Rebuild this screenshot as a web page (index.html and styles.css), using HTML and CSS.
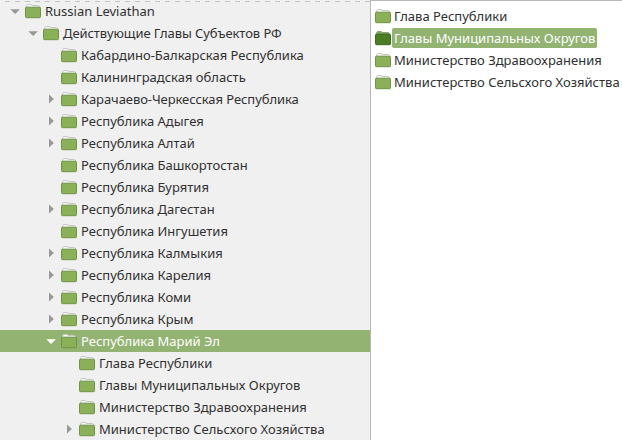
FILE: index.html
```
<!DOCTYPE html>
<html lang="ru">
<head>
    <meta charset="UTF-8">
    <meta content="width=device-width, initial-scale=1.0" name="viewport">
    <link rel="stylesheet" href="styles.css">
    <title>Russian Leviathan</title>
</head>
<body>

<svg class="symbols" height="0" width="0" xmlns="http://www.w3.org/2000/svg">
    <symbol id="folder" viewBox="0 0 16 16">
        <path class="paper" d="M1.5 6V3L2.5 1.5H6L7.5 2.5H13.5L14.5 3.5V6Z"/>
        <rect class="front" height="10.5" rx="1" width="15" x="0.5" y="4.2"/>
    </symbol>
    <symbol id="open" viewBox="0 0 10 10">
        <path d="M0.3 3.3H9.9L5.1 8.1Z"/>
    </symbol>
    <symbol id="closed" viewBox="0 0 10 10">
        <path d="M3 0.4L7.8 5L3 9.6Z"/>
    </symbol>
</svg>

<div class="window">
    <ul class="tree">
        <li class="row level0"><svg class="arrow"><use href="#open"/></svg><svg class="folder"><use href="#folder"/></svg><span>Russian Leviathan</span></li>
        <li class="row level1 tight"><svg class="arrow"><use href="#open"/></svg><svg class="folder"><use href="#folder"/></svg><span>Действующие Главы Субъектов РФ</span></li>
        <li class="row level2"><svg class="arrow"></svg><svg class="folder"><use href="#folder"/></svg><span>Кабардино-Балкарская Республика</span></li>
        <li class="row level2"><svg class="arrow"></svg><svg class="folder"><use href="#folder"/></svg><span>Калининградская область</span></li>
        <li class="row level2 tight"><svg class="arrow"><use href="#closed"/></svg><svg class="folder"><use href="#folder"/></svg><span>Карачаево-Черкесская Республика</span></li>
        <li class="row level2"><svg class="arrow"><use href="#closed"/></svg><svg class="folder"><use href="#folder"/></svg><span>Республика Адыгея</span></li>
        <li class="row level2"><svg class="arrow"><use href="#closed"/></svg><svg class="folder"><use href="#folder"/></svg><span>Республика Алтай</span></li>
        <li class="row level2"><svg class="arrow"></svg><svg class="folder"><use href="#folder"/></svg><span>Республика Башкортостан</span></li>
        <li class="row level2"><svg class="arrow"></svg><svg class="folder"><use href="#folder"/></svg><span>Республика Бурятия</span></li>
        <li class="row level2"><svg class="arrow"><use href="#closed"/></svg><svg class="folder"><use href="#folder"/></svg><span>Республика Дагестан</span></li>
        <li class="row level2"><svg class="arrow"></svg><svg class="folder"><use href="#folder"/></svg><span>Республика Ингушетия</span></li>
        <li class="row level2"><svg class="arrow"><use href="#closed"/></svg><svg class="folder"><use href="#folder"/></svg><span>Республика Калмыкия</span></li>
        <li class="row level2"><svg class="arrow"><use href="#closed"/></svg><svg class="folder"><use href="#folder"/></svg><span>Республика Карелия</span></li>
        <li class="row level2"><svg class="arrow"><use href="#closed"/></svg><svg class="folder"><use href="#folder"/></svg><span>Республика Коми</span></li>
        <li class="row level2"><svg class="arrow"><use href="#closed"/></svg><svg class="folder"><use href="#folder"/></svg><span>Республика Крым</span></li>
        <li class="row level2 selected"><svg class="arrow"><use href="#open"/></svg><svg class="folder"><use href="#folder"/></svg><span>Республика Марий Эл</span></li>
        <li class="row level3"><svg class="arrow"></svg><svg class="folder"><use href="#folder"/></svg><span>Глава Республики</span></li>
        <li class="row level3"><svg class="arrow"></svg><svg class="folder"><use href="#folder"/></svg><span>Главы Муниципальных Округов</span></li>
        <li class="row level3"><svg class="arrow"></svg><svg class="folder"><use href="#folder"/></svg><span>Министерство Здравоохранения</span></li>
        <li class="row level3"><svg class="arrow"><use href="#closed"/></svg><svg class="folder"><use href="#folder"/></svg><span>Министерство Сельсхого Хозяйства</span></li>
    </ul>

    <ul class="files">
        <li class="file"><svg class="folder"><use href="#folder"/></svg><span class="name">Глава Республики</span></li>
        <li class="file active"><svg class="folder"><use href="#folder"/></svg><span class="name">Главы Муниципальных Округов</span></li>
        <li class="file"><svg class="folder"><use href="#folder"/></svg><span class="name">Министерство Здравоохранения</span></li>
        <li class="file"><svg class="folder"><use href="#folder"/></svg><span class="name">Министерство Сельсхого Хозяйства</span></li>
    </ul>
</div>

</body>
</html>
```

FILE: styles.css
```
body {
    margin: 0;
    overflow: hidden;
    font-family: "Noto Sans", sans-serif;
    font-size: 13px;
    color: #303030;
}

ul {
    list-style: none;
    margin: 0;
    padding: 0;
}

.symbols {
    display: block;
}

.window {
    display: flex;
    height: 440px;
}

/* Sidebar tree */
.tree {
    width: 370px;
    flex: none;
    background: repeating-linear-gradient(90deg, #f0f0f0 0 5px, #c4c4c4 5px 10px) 0 1px / 100% 1px no-repeat #f0f0f0;
}

.row {
    display: flex;
    align-items: center;
    height: 22px;
    line-height: 22px;
    white-space: nowrap;
}

.level0 { padding-left: 10px; }
.level1 { padding-left: 28px; }
.level2 { padding-left: 46px; }
.level3 { padding-left: 64px; }

.tight {
    letter-spacing: -0.07px;
}

.arrow {
    width: 10px;
    height: 10px;
    margin-right: 5px;
    fill: #989898;
}

.folder {
    width: 16px;
    height: 16px;
    margin-right: 4px;
    --paper: #fafafa;
    --paper-edge: #c3c7be;
    --front: #8bb158;
    --front-edge: #6f9246;
}

.paper {
    fill: var(--paper);
    stroke: var(--paper-edge);
}

.front {
    fill: var(--front);
    stroke: var(--front-edge);
}

.selected {
    background: #92b372;
    color: #fff;
}

.selected .arrow {
    fill: #fff;
}

/* File list */
.files {
    flex: 1;
    box-sizing: border-box;
    padding: 4px 0 0 4px;
    background: #fff;
    border-left: 1px solid #b8b8b8;
    border-top: 1px solid #b8b8b8;
}

.file {
    display: flex;
    align-items: center;
    height: 22px;
    white-space: nowrap;
}

.file .folder {
    margin-right: 1px;
}

.name {
    padding: 0 2px;
    line-height: 20px;
    border-radius: 2px;
}

.active .name {
    background: #92b372;
    color: #fff;
}

.active .folder {
    --paper: #86a56c;
    --paper-edge: #86a56c;
    --front: #4b7d25;
    --front-edge: #3b681b;
}
```
